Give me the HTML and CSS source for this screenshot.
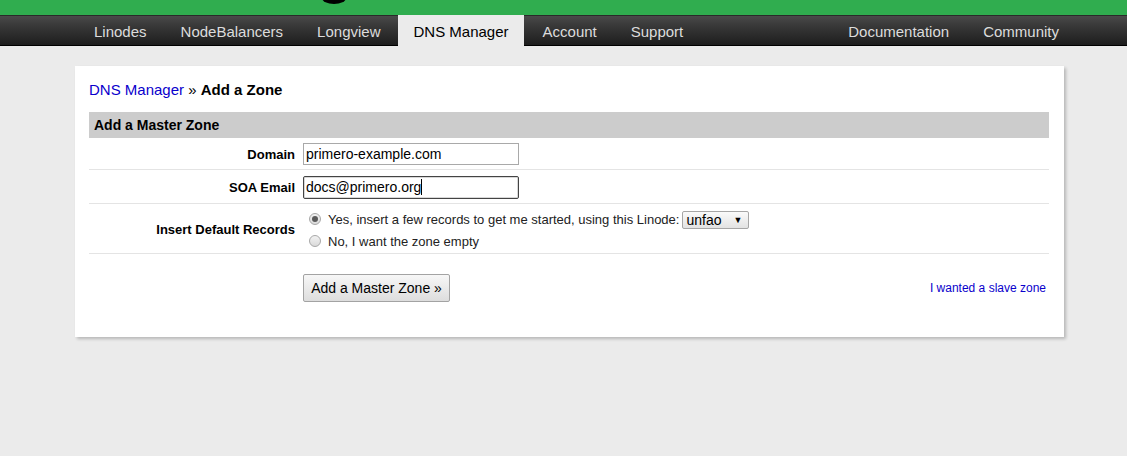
FILE: index.html
```html
<!DOCTYPE html>
<html>
<head>
<meta charset="utf-8">
<link rel="stylesheet" href="styles.css">
</head>
<body>
<div class="topbar"><span class="logo-tail"></span></div>
<nav class="nav">
  <div class="nav-group">
    <a class="tab">Linodes</a>
    <a class="tab">NodeBalancers</a>
    <a class="tab">Longview</a>
    <a class="tab active">DNS Manager</a>
    <a class="tab">Account</a>
    <a class="tab">Support</a>
  </div>
  <div class="nav-group right">
    <a class="tab">Documentation</a>
    <a class="tab">Community</a>
  </div>
</nav>
<main class="page">
  <section class="card">
    <h1 class="crumbs"><a class="link">DNS Manager</a> » <b>Add a Zone</b></h1>
    <div class="section-head">Add a Master Zone</div>
    <div class="form">
      <div class="row">
        <label class="label">Domain</label>
        <div class="field"><input class="text" type="text" value="primero-example.com"></div>
      </div>
      <div class="row email">
        <label class="label">SOA Email</label>
        <div class="field"><div class="text focused">docs@primero.org<span class="caret"></span></div></div>
      </div>
      <div class="row tall">
        <label class="label">Insert Default Records</label>
        <div class="field options">
          <div class="option"><span class="radio checked"></span>Yes, insert a few records to get me started, using this Linode: <span class="select">unfao<span class="arrow">▼</span></span></div>
          <div class="option"><span class="radio"></span>No, I want the zone empty</div>
        </div>
      </div>
      <div class="row actions">
        <div></div>
        <div class="field action-field">
          <button class="btn">Add a Master Zone »</button>
          <a class="link small">I wanted a slave zone</a>
        </div>
      </div>
    </div>
  </section>
</main>
</body>
</html>
```

FILE: styles.css
```css
* { box-sizing: border-box; }
html, body { margin: 0; padding: 0; }
body {
  background: #ebebeb;
  font-family: "Liberation Sans", Arial, sans-serif;
  color: #000;
  height: 456px;
  overflow: hidden;
}
.topbar {
  height: 15px;
  background: #30ad4f;
  overflow: hidden;
  display: flex;
}
.logo-tail {
  display: block;
  width: 24px;
  height: 12px;
  margin-left: 322px;
  margin-top: -8px;
  background: #000;
  border-radius: 50%;
}
.nav {
  height: 31px;
  display: flex;
  padding-left: 77px;
  padding-right: 51px;
  background: linear-gradient(#4a4a4a, #3a3a3a 30%, #1d1d1d);
  border-top: 1px solid #2a2a2a;
  border-bottom: 1px solid #000;
}
.nav-group { display: flex; }
.nav-group.right { margin-left: auto; }
.tab {
  display: flex;
  align-items: center;
  padding: 1px 17px 0;
  font-size: 15px;
  color: #dcdcdc;
  text-decoration: none;
}
.tab.active {
  background: #ebebeb;
  color: #000;
  margin-top: -1px;
  margin-bottom: -1px;
  padding-top: 2px;
  padding-left: 16px;
  padding-right: 15px;
  margin-right: 2px;
}
.page {
  padding: 20px 63px 0 75px;
}
.card {
  background: #fff;
  height: 271px;
  padding: 15px 15px 0 14px;
  box-shadow: 2px 2px 3px rgba(0,0,0,0.22);
}
.crumbs {
  margin: 0;
  font-size: 15px;
  font-weight: normal;
  line-height: 17px;
  height: 17px;
  margin-bottom: 14px;
}
.crumbs b { font-weight: bold; }
.link { color: #0a00cc; text-decoration: none; }
.section-head {
  height: 26px;
  background: #cccccc;
  font-size: 14px;
  font-weight: bold;
  line-height: 27px;
  padding-left: 5px;
}
.form { display: flex; flex-direction: column; }
.row {
  display: grid;
  grid-template-columns: 206px 1fr;
  column-gap: 8px;
  align-items: center;
  border-bottom: 1px solid #e4e4e4;
  min-height: 32px;
  padding-top: 1px;
}
.row.email { min-height: 34px; padding-top: 2px; }
.row.tall { min-height: 50px; padding-top: 2px; }
.label {
  text-align: right;
  font-size: 13px;
  font-weight: bold;
}
.text {
  display: block;
  width: 216px;
  height: 22px;
  border: 1px solid #a9a9a9;
  font-family: "Liberation Sans", Arial, sans-serif;
  font-size: 14px;
  padding: 0 2px;
  line-height: 20px;
  color: #000;
  background: #fff;
  margin: 0;
  outline: none;
}
.text.focused {
  border: 1px solid #444;
  border-radius: 2px;
  box-shadow: inset 0 0 0 1px #d8d8d8;
  height: 23px;
  line-height: 21px;
}
.caret {
  display: inline-block;
  width: 1px;
  height: 16px;
  background: #000;
  vertical-align: -3px;
}
.options {
  display: flex;
  flex-direction: column;
  gap: 1px;
  padding-top: 1px;
}
.option {
  display: flex;
  align-items: center;
  font-size: 13px;
  color: #222;
  height: 21px;
}
.radio {
  width: 12px;
  height: 12px;
  border-radius: 50%;
  border: 1px solid #a8a8a8;
  background: linear-gradient(#f2f2f2, #dadada);
  margin: 0 7px 0 6px;
  position: relative;
  flex: none;
}
.radio.checked::after {
  content: "";
  position: absolute;
  left: 2px; top: 2px;
  width: 6px; height: 6px;
  border-radius: 50%;
  background: #5a5a5a;
}
.select {
  display: inline-flex;
  align-items: center;
  justify-content: space-between;
  width: 67px;
  height: 18px;
  margin-left: 3px;
  margin-top: 2px;
  border: 1px solid #a6a6a6;
  border-radius: 2px;
  background: linear-gradient(#fafafa, #e2e2e2);
  font-size: 14px;
  color: #000;
  padding: 0 6px 0 3px;
}
.arrow { font-size: 9px; }
.row.actions {
  border-bottom: none;
  min-height: 0;
  padding-top: 20px;
}
.action-field {
  display: flex;
  align-items: center;
  justify-content: space-between;
  padding-right: 3px;
}
.btn {
  width: 147px;
  height: 28px;
  font-family: "Liberation Sans", Arial, sans-serif;
  font-size: 14px;
  color: #000;
  border: 1px solid #a3a3a3;
  border-radius: 2px;
  background: linear-gradient(#f7f7f7, #dddddd);
  padding: 0;
}
.small { font-size: 12px; margin-top: 0; }
```
